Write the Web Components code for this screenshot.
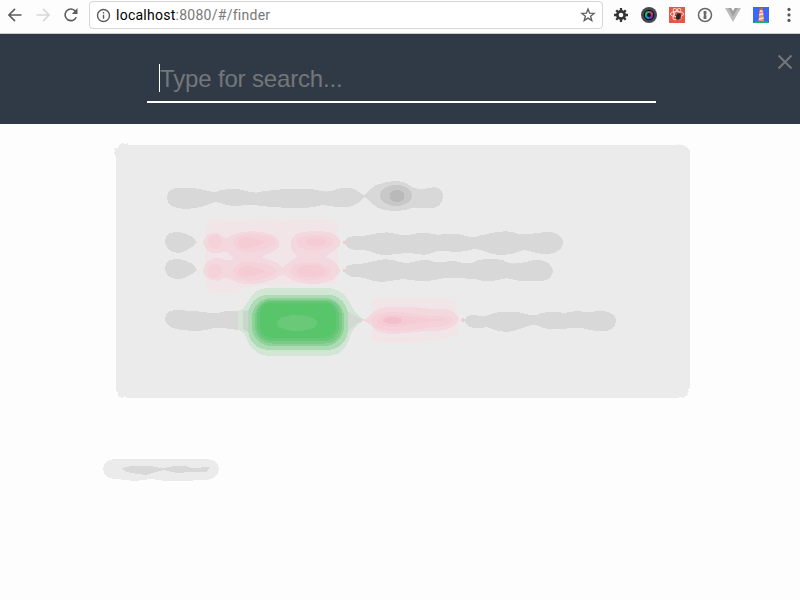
<!DOCTYPE html>
<html lang="en"><head><meta charset="utf-8"><title>Finder</title>
<style>html,body{margin:0;width:800px;height:600px;overflow:hidden;background:#fdfdfd}</style></head>
<body><finder-app></finder-app>
<script>
const define = (name, html) => customElements.define(name, class extends HTMLElement {
  constructor(){ super(); this.attachShadow({mode:'open'}).innerHTML = html; }
});

define('url-field', `<style>
:host{display:flex;align-items:center;box-sizing:border-box;width:514px;height:28px;border:1px solid #d6d6d6;border-radius:4px;background:#fff;padding:0 6px;font:14px/20px Roboto,"Liberation Sans",sans-serif;color:#777;margin-top:-3px}
.url{margin-left:5px;flex:1;white-space:pre;letter-spacing:.26px}b{font-weight:400;color:#000}svg{display:block;flex:none}
</style><svg width="15" height="15" viewBox="0 0 15 15" fill="none" stroke="#5c5c5c" stroke-width="1.4"><circle cx="7.5" cy="7.5" r="6"/><path d="M7.5 6.7v4M7.5 4v1.5"/></svg><span class="url"><b>localhost</b>:8080/#/finder</span>
<svg width="16" height="16" viewBox="0 0 16 16" fill="none" stroke="#5c5c5c" stroke-width="1.3"><path d="M8 2l1.6 4.2 4.5.2-3.5 2.8 1.2 4.3L8 11.1l-3.8 2.4 1.2-4.3-3.5-2.8 4.5-.2z"/></svg>`);

define('extension-icons', `<style>:host{display:flex;gap:12px;margin-left:10px;margin-top:-3px}svg{display:block;width:16px;height:16px;flex:none}</style>
<svg viewBox="0 0 16 16"><g stroke="#353535" stroke-width="2.3"><path d="M8 1v14M1 8h14M3.2 3.2l9.6 9.6M12.8 3.2L3.200 12.8"/></g><circle cx="8" cy="8" r="5" fill="#353535"/><circle cx="8" cy="8" r="2.3" fill="#fdfdfd"/></svg>
<svg viewBox="0 0 16 16"><circle cx="8" cy="8" r="8" fill="#45494f"/><circle cx="8" cy="8" r="5.3" fill="#101018"/><g fill="none" stroke-width="2.2"><path d="M5 8a3 3 0 0 1 3-3" stroke="#27b45b"/><path d="M8 5a3 3 0 0 1 3 3" stroke="#c3427c"/><path d="M11 8a3 3 0 0 1-3 3" stroke="#7e35bd"/><path d="M8 11a3 3 0 0 1-3-3" stroke="#119ab5"/></g><circle cx="8" cy="8" r="1.2" fill="#17151b"/></svg>
<svg viewBox="0 0 16 16"><path fill="#e05a45" d="M0 0h16v16H0z"/><g fill="none" stroke="#ffe2db" stroke-width=".9"><ellipse cx="8" cy="7" rx="6.6" ry="2.6"/><ellipse cx="8" cy="7" rx="6.3" ry="2.6" transform="rotate(60 8 7)"/><ellipse cx="8" cy="7" rx="6.3" ry="2.6" transform="rotate(120 8 7)"/></g><ellipse cx="9.4" cy="9.5" rx="2.300" ry="3.2" transform="rotate(25 9.4 9.5)" fill="#352520"/><path d="M6 8l6 4M7 12l5-3M9 6l1 7M10 7l2-1" stroke="#352520" stroke-width=".8"/></svg>
<svg viewBox="0 0 16 16"><circle cx="8" cy="8" r="6.5" fill="#fafafa" stroke="#696969" stroke-width="1.5"/><path d="M6.6 4h2.8v3.2l-.6.8.6.8V12H6.6V8.8l.6-.8-.6-.8z" fill="#696969"/></svg>
<svg viewBox="0 0 16 16"><path d="M0 1h16L8 15z" fill="#bcbcbc"/><path d="M3.2 1h3.1L8 4l1.7-3h3.1L8 9.4z" fill="#a0a0a0"/><path d="M6.3 1h3.4L8 4z" fill="#fdfdfd"/></svg>
<svg viewBox="0 0 16 16"><path fill="#3b68fb" d="M0 0h16v16H0z"/><path fill="#19b56d" d="M0 16q2-2 6-2h5q4 0 5 2z"/><path fill="#f49568" d="M6.300 4h3.8l.8 10H5.6z"/><path d="M6.1 7l4.1-1v1.4l-4.3 1.2zM5.800 11.5l4.8-1.500v1.4L5.800 13z" fill="#fce4d5"/><path fill="#ef5350" d="M6 2l2.2-1.5 2.200 1.5v1H6z"/><path fill="#ffd76a" d="M6.800 3h2.800v2H6.8z"/></svg>
<svg viewBox="0 0 16 16" fill="#565656"><circle cx="8" cy="2.4" r="1.6"/><circle cx="8" cy="7.9" r="1.6"/><circle cx="8" cy="13.4" r="1.6"/></svg>`);

define('browser-bar', `<style>:host{display:flex;align-items:center;box-sizing:border-box;height:34px;background:#fdfdfd;border-bottom:1px solid #ccc;padding-left:7px}.nav{display:flex;gap:12px;margin-right:10px;margin-top:-3px}.nav svg{display:block;width:16px;height:16px}.nav svg{fill:none;stroke:#5c5c5c;stroke-width:1.6}</style>
<div class="nav"><svg viewBox="0 0 16 16"><path d="M14.5 8H2M8 1.9L1.9 8 8 14.1"/></svg><svg viewBox="0 0 16 16" style="stroke:#d7d7d7"><path d="M1.5 8H14M8 1.9L14.1 8 8 14.1"/></svg><svg viewBox="0 0 16 16"><path d="M13.2 10.2A5.8 5.8 0 1 1 12.4 4.2"/><path d="M14.5 1v6H8.8z" fill="#5c5c5c" stroke="none"/></svg></div>
<url-field></url-field><extension-icons></extension-icons>`);

define('search-header', `<style>:host{display:grid;grid-template-columns:147px 509px 1fr;height:90px;background:#303a46}.field{box-sizing:border-box;height:69px;border-bottom:2px solid #fff;padding:30px 0 0 12px}.text{display:block;border-left:1px solid #fff;height:28px;font:24px/30px "Liberation Sans",Arial,sans-serif;color:#757679;white-space:pre;letter-spacing:-.16px}.close{justify-self:end;margin:20px 7px 0 0;width:16px;height:16px}</style>
<span></span><div class="field"><span class="text">Type for search...</span></div><svg class="close" viewBox="0 0 16 16" fill="none" stroke="#75777b" stroke-width="1.9"><path d="M1.5 1.5l13 13M14.5 1.5l-13 13"/></svg>`);

define('soft-document', `<style>:host{display:block;height:476px}svg{display:block}</style>
<svg width="800" height="476" viewBox="0 124 800 476" shape-rendering="crispEdges">
<path fill="#ebebeb" d="M126 145H677L678 144L680 145H684L685 147L687 146L688 149L690 151V387L688 389L689 392L687 393L688 395L685 396L684 398L680 397L677 398H128L124 396L122 398L118 396V393L116 391V157L114 153L115 151L114 148L117 149L119 146L120 144L123 143L125 144L128 143V145Z"/>
<g fill="#d8d8d8">
<path d="M167 198C167 191 171 188 178 188H190C202 188 207 192 216 192C223 189 228 189 235 189C243 189 249 193 257 192.500C268 190 278 190 285 189L307 188.500C317 189 322 193 331 191Q342 187 351 188C359 190 361 195 364.500 195C369 192 372 185 380 184C390 180 403 180 409 185C413 188 416 189 423 189L435 187Q443 189 443 197Q441 208 432 208H412C402 212 388 212 378 208C370 203 368 197 364 197C360 201 357 207 344 207.500C334 207.500 328 205 322 205C313 208 303 208 291 208L270 207C260 205 250 205 243 205C235 208 224 204 216 202C207 204 201 209 185 209C172 208 167 205 167 198Z"/>
<path d="M165 240C166 233 172 232 178 232C187 233 189 236 193 237C197 240 197 245 192 247C187 249 185 253 178 253C169 252 165 248 165 240Z"/>
<path d="M165 267C166 260 172 259 178 259C187 260 189 263 193 264C197 267 197 272 192 274C187 276 185 279 178 279C169 279 165 275 165 267Z"/>
<path d="M345 242C345 236 352 236 361 236.500C370 235 380 232 388 232.500C398 234 404 237 413 234C425 231 431 234 438 235C449 232 460 234 470 237C475 238 480 235 487 234C498 231 510 230 519 234C531 235 538 232 550 232Q563 234 563 243Q561 254 545 254C535 254 530 250 523 250C513 254 508 255 499 255C488 254 482 249 474 249C467 251 461 252 452 252C444 250 438 250 432 253C421 257 417 253 409 253C400 253 393 255 383 255C373 254 367 249 360 250C350 250 345 248 345 242Z"/>
<path d="M345 270C345 264 352 264 361 264C370 262 378 260 383 259.500C390 259 395 260 400 262C411 265 417 259 428 260C436 264 445 261 455 261C465 264 471 265 478 260Q490 258 503 260C510 266 520 263 530 261Q540 258 548 263Q553 267 553 272Q550 281 540 281H524C514 281 510 277 502 279Q487 283 475 279C464 278 455 278 444 278Q425 283 412 280C403 279 399 279 390 281Q379 283 370 280C363 277 357 277 352 277C347 275 345 274 345 270Z"/>
<path d="M165 318C166 311 172 310 178 310L206 312C212 315 219 313 226 311H246V331L223 328H214C204 332 194 331 182 330Q165 328 165 318Z"/>
<path d="M345 311Q358 314 364 320Q357 326 348 331Z"/>
<path d="M465 321C465 315 470 315 477 315C485 319 492 312 501 312H518C528 314 533 318 541 313Q554 311 564 313Q576 310 585 312L603 311Q616 313 616 321Q615 331 601 331.500C591 331 586 328 578 328C566 328 560 330 550 329C542 329 537 324 532 325C523 327 518 331 507 332Q495 331 487 327C475 330 465 327 465 321Z"/>
</g>
<ellipse cx="396" cy="195.500" rx="16" ry="10.500" fill="#c8c8c8"/><ellipse cx="397" cy="196" rx="7.500" ry="6" fill="#b9b9b9"/>
<path fill="#f2e5e7" d="M207 222Q212 219 219 221H249L263 219L276 221L300 220H330Q338 221 337 229V284H289L266 285L245 287L235 292H215Q207 292 206 288V281L205 263V254L207 248L205 236Z"/>
<path fill="#f2e5e7" d="M372 301Q374 297 385 298H429L438 299H455L457 311V335L445 339L425 340L410 343H380L372 340Z"/>
<g fill="#f3d9de"><path d="M203 242C205 233 217 230 222 236C226 239 229 238 232 235C244 229 263 231 272 235C282 239 281 247 275 250C270 254 265 254 262 257C267 261 278 260 283 268C287 263 293 260 298 256C287 249 289 237 299 233C311 230 330 230 335 235C343 241 341 247 335 250C330 254 326 254 326 257C334 260 340 266 340 271C337 278 330 284 312 284C296 284 289 279 285 274C280 276 276 277 272 280C258 286 241 285 234 281C224 276 225 278 218 281C208 280 203 276 203 271C204 261 211 258 217 258C225 258 229 263 234 258C228 254 228 250 223 252C213 256 205 252 203 242Z"/>
<path d="M362 320C369 319 371 312 380 308C392 306 404 307 414 307C426 309 436 309 445 309C454 311 459 315 459 320C455 327 449 330 437 331C423 330 413 333 402 333C387 336 377 332 371 326Q367 321 362 321Z"/></g>
<g fill="#f5d1d9"><ellipse cx="215" cy="242" rx="7.500" ry="7"/><ellipse cx="215" cy="271" rx="7.500" ry="7"/><path d="M233 242C235 235 243 234 251 234C266 234 276 237 276 242C273 249 259 251 249 252C238 251 233 248 233 242Z"/><path d="M233 271C235 263 243 262 251 262C266 263 276 266 276 271C273 278 259 280 249 281C238 280 233 277 233 271Z"/><path d="M296 241C298 236 308 235 317 235C328 235 333 238 333 242C332 248 324 250 315 250C303 250 296 247 296 241Z"/><path d="M290 271C291 264 300 262 311 263C323 263 331 267 332 271C330 277 321 280 312 280C298 280 290 277 290 271Z"/><path d="M371 321C372 314 382 312 395 312C415 312 424 317 442 316Q453 316 453 321Q449 327 434 327Q406 331 394 331C380 331 372 328 371 321Z"/></g>
<g fill="#f5cbd4"><path d="M238 243C239 237 247 236 254 238L265 242C259 246 251 248 244 248Q239 247 238 243Z"/><path d="M238 272C239 266 247 265 254 267L265 271C259 276 251 277 244 277Q239 276 238 272Z"/><ellipse cx="316" cy="242" rx="10" ry="4.500"/><ellipse cx="311" cy="271" rx="14" ry="6.500"/><path d="M377 321C378 316 386 315 393 315Q415 316 430 319H444V321H427Q408 326 391 327C382 326 377 325 377 321Z"/></g><ellipse cx="393" cy="320.500" rx="9.500" ry="3.500" fill="#f3bfcc"/>
<g fill="#f4cbd4"><circle cx="196" cy="242.500" r="1"/><circle cx="196" cy="270.500" r="1"/><circle cx="344.500" cy="242.500" r="1.500"/><circle cx="344.500" cy="270.500" r="1.500"/><circle cx="463" cy="320" r="1.700"/></g>
<path fill="#d3e6d5" d="M238 311C246 308 245 304 249 300C254 290 262 288 269 288H328C342 289 347 297 351 305Q354 311 361 318V322Q352 328 349 340C344 352 337 356 327 356H269C255 355 249 346 246 337Q243 330 238 330Z"/>
<path fill="#ced4ce" d="M243 311H246Q250 309 252 303V339Q249 332 243 329Z"/><path fill="#d3d8d3" d="M347 311Q352 314 361 319V321Q350 328 347 333Z"/>
<rect x="248" y="294.500" width="100" height="55.500" rx="21" fill="#addbb3"/><rect x="252" y="298" width="92" height="48" rx="19" fill="#90d19b"/><rect x="255" y="299.500" width="87" height="44" rx="17" fill="#78ca85"/><rect x="257" y="301" width="82" height="40" rx="15" fill="#66c677"/><rect x="260" y="302.500" width="76" height="35.500" rx="12" fill="#58c56b"/>
<ellipse cx="297" cy="323" rx="20" ry="8" fill="#69c978"/>
<path fill="#ebebeb" d="M103 469C104 462 109 459 117 459H205C214 459 219 463 219 469C218 477 212 480 204 480L181 481H165L151 479L135 481L116 479C108 479 103 475 103 469Z"/>
<path fill="#d8d8d8" d="M121 468L132 466H151L162 468.500L174 466H185L192 468L210 467L207 472H190L177 473L164 470L152 473L147 475L137 474L127 472Z"/>
</svg>`);
define('finder-app', `<style>:host{display:flex;flex-direction:column;width:800px;height:600px;background:#fdfdfd}</style><browser-bar></browser-bar><search-header></search-header><soft-document></soft-document>`);
</script></body></html>
